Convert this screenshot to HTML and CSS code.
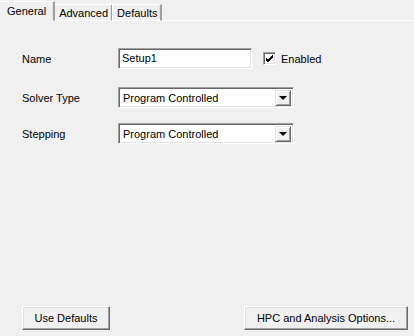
FILE: index.html
```html
<!DOCTYPE html>
<html lang="en">
<head>
  <meta charset="UTF-8" />
  <title>Setup</title>
  <link rel="stylesheet" href="styles.css">
</head>
<body>
  <div class="dialog">
    <div class="tabs">
      <div class="tab active">General</div>
      <div class="tab">Advanced</div>
      <div class="tab">Defaults</div>
      <div class="tab-fill"></div>
    </div>

    <div class="panel">
      <div class="form">
        <div class="row row-name">
          <label class="label">Name</label>
          <div class="field text-field">Setup1</div>
          <label class="check">
            <span class="box">
              <svg width="9" height="9" viewBox="0 0 9 9"><path d="M1 4 L3 6 L8 1 M1 5 L3 7 L8 2 M1 6 L3 8 L8 3" stroke="#000" stroke-width="1" fill="none"/></svg>
            </span>
            Enabled
          </label>
        </div>
        <div class="row">
          <label class="label">Solver Type</label>
          <div class="field select">
            <span class="value">Program Controlled</span>
            <span class="drop"><span class="arrow"></span></span>
          </div>
        </div>
        <div class="row">
          <label class="label">Stepping</label>
          <div class="field select">
            <span class="value">Program Controlled</span>
            <span class="drop"><span class="arrow"></span></span>
          </div>
        </div>
      </div>

      <div class="buttons">
        <button class="btn btn-defaults">Use Defaults</button>
        <button class="btn btn-hpc">HPC and Analysis Options...</button>
      </div>
    </div>
  </div>
</body>
</html>
```

FILE: styles.css
```css
* {
  box-sizing: border-box;
  margin: 0;
  padding: 0;
}

body {
  font-family: Tahoma, 'Liberation Sans', Arial, sans-serif;
  font-size: 11px;
  color: #000;
  background: #f0f0f0;
  width: 414px;
  height: 336px;
  overflow: hidden;
}

.dialog {
  display: flex;
  flex-direction: column;
  height: 336px;
}

/* tab strip */
.tabs {
  display: flex;
  align-items: flex-end;
  height: 21px;
}

.tab {
  height: 17px;
  padding: 2px 3px 0 4px;
  border-top: 1px solid #fff;
  border-left: 1px solid #fff;
  border-right: 2px solid #a0a0a0;
  box-shadow: inset -1px 0 0 #e3e3e3;
  border-bottom: 1px solid #fff;
  white-space: nowrap;
  margin-left: -1px;
}

.tab.active {
  height: 20px;
  padding: 3px 7px 0 7px;
  margin-left: 0;
  border-left: none;
  border-bottom-color: #f0f0f0;
  z-index: 1;
}

.tab-fill {
  flex: 1;
  border-bottom: 1px solid #fff;
}

/* main panel */
.panel {
  flex: 1;
  display: flex;
  flex-direction: column;
  justify-content: space-between;
  padding: 27px 6px 6px 22px;
}

.form {
  display: flex;
  flex-direction: column;
  gap: 15px;
}

.row {
  display: flex;
  align-items: center;
  height: 21px;
}

.row-name {
  margin-bottom: 3px;
}

.label {
  width: 96px;
}

.field {
  height: 21px;
  background: #fff;
  border-top: 1px solid #a0a0a0;
  border-left: 1px solid #a0a0a0;
  border-right: 1px solid #fff;
  border-bottom: 1px solid #fff;
  box-shadow: inset 1px 1px 0 #696969, inset -1px -1px 0 #e3e3e3;
}

.text-field {
  width: 134px;
  padding: 3px 3px;
}

.select {
  width: 176px;
  display: flex;
  align-items: center;
  padding: 2px 2px 2px 4px;
}

.select .value {
  flex: 1;
}

.drop {
  width: 16px;
  height: 16px;
  background: #f0f0f0;
  border-top: 1px solid #e3e3e3;
  border-left: 1px solid #e3e3e3;
  border-right: 1px solid #696969;
  border-bottom: 1px solid #696969;
  box-shadow: inset 1px 1px 0 #fff, inset -1px -1px 0 #a0a0a0;
  display: flex;
  align-items: center;
  justify-content: center;
}

.arrow {
  width: 0;
  height: 0;
  border-left: 4px solid transparent;
  border-right: 4px solid transparent;
  border-top: 4px solid #000;
  margin-top: 1px;
}

.check {
  display: flex;
  align-items: center;
  gap: 5px;
  margin-left: 11px;
}

.box {
  width: 13px;
  height: 13px;
  background: #fff;
  border-top: 1px solid #a0a0a0;
  border-left: 1px solid #a0a0a0;
  border-right: 1px solid #fff;
  border-bottom: 1px solid #fff;
  box-shadow: inset 1px 1px 0 #696969, inset -1px -1px 0 #e3e3e3;
  display: flex;
  align-items: center;
  justify-content: center;
}

/* bottom buttons */
.buttons {
  display: flex;
  justify-content: space-between;
}

.btn {
  height: 24px;
  font-family: inherit;
  font-size: 11px;
  background: #f0f0f0;
  border-top: 1px solid #fff;
  border-left: 1px solid #fff;
  border-right: 1px solid #696969;
  border-bottom: 1px solid #696969;
  box-shadow: inset -1px -1px 0 #a0a0a0, inset 1px 1px 0 #e3e3e3;
}

.btn-defaults {
  width: 88px;
}

.btn-hpc {
  width: 164px;
  margin-right: 0;
}
```
